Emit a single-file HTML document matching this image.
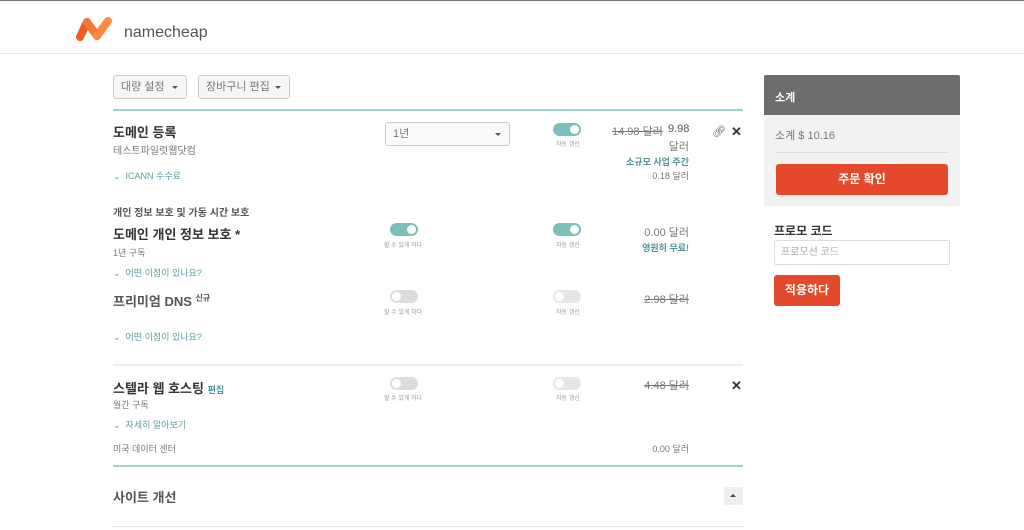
<!DOCTYPE html>
<html><head><meta charset="utf-8"><style>
*{margin:0;padding:0;box-sizing:border-box}
body{width:1024px;height:530px;background:#fff;position:relative;overflow:hidden;font-family:"Liberation Sans","Noto Sans CJK KR",sans-serif;color:#444}
.a{position:absolute;white-space:nowrap}
.b{font-weight:bold;color:#333}
.g{color:#777}
.t{color:#5a9ea0}
.s{text-decoration:line-through;color:#777}
.btn{position:absolute;border:1px solid #ccc;border-radius:3px;background:#f6f6f6;font-size:11px;color:#777;padding-left:7px;line-height:22px}
.car{position:absolute;right:8px;top:10px;border-left:3px solid transparent;border-right:3px solid transparent;border-top:3px solid #555}
.tg{position:absolute;width:28px;height:13px;border-radius:7px;background:#7dbfbb}
.tg::after{content:"";position:absolute;right:2px;top:2px;width:9px;height:9px;border-radius:50%;background:#fff}
.tg.off{background:#ddd}.tg.off::after{left:2px;right:auto}
.tl{position:absolute;font-size:6px;color:#999;white-space:nowrap}
.chev{font-size:9px;color:#5a9ea0}
.r{text-align:right}
</style></head><body>
<div class="a" style="left:0;top:0;width:1024px;height:1px;background:#777"></div>
<div class="a" style="left:0;top:53px;width:1024px;height:1px;background:#e6e6e6"></div>
<svg class="a" style="left:75px;top:16px" width="40" height="26" viewBox="0 0 40 26"><path d="M5 21 L12 6" stroke="#f25c22" stroke-width="8" stroke-linecap="round"/><path d="M12 6 L22 20" stroke="#f47a3a" stroke-width="8" stroke-linecap="round"/><path d="M22 20 L33 5" stroke="#ff8a3d" stroke-width="8" stroke-linecap="round"/></svg>
<div class="a" style="left:124px;top:24px;font-size:16px;color:#555">namecheap</div>

<div class="btn" style="left:113px;top:75px;width:74px;height:24px">대량 설정<span class="car"></span></div>
<div class="btn" style="left:198px;top:75px;width:92px;height:24px">장바구니 편집<span class="car"></span></div>
<div class="a" style="left:113px;top:109px;width:630px;height:2px;background:#9fd3d1"></div>

<div class="a b" style="left:113px;top:122px;font-size:13px">도메인 등록</div>
<div class="a g" style="left:113px;top:142px;font-size:10px">테스트파일럿웹닷컴</div>
<div class="btn" style="left:385px;top:122px;width:125px;height:24px;background:#fafafa">1년<span class="car"></span></div>
<div class="tg" style="left:553px;top:123px"></div><div class="tl" style="left:556px;top:139px">자동 갱신</div>
<div class="a s" style="left:612px;top:123px;font-size:11px">14.98 달러</div>
<div class="a" style="left:668px;top:123px;font-size:11px;color:#555">9.98</div>
<div class="a g r" style="left:600px;width:89px;top:138px;font-size:11px">달러</div>
<div class="a t b r" style="left:560px;width:129px;top:155px;font-size:9px;color:#4f9496">소규모 사업 주간</div>
<div class="a g r" style="left:600px;width:89px;top:169px;font-size:9px">0.18 달러</div>
<div class="a" style="left:712px;top:125px;font-size:11px;color:#555">🔗︎</div>
<div class="a" style="left:731px;top:124px;font-size:13px;font-weight:bold;color:#333">✕</div>
<div class="a t" style="left:113px;top:169px;font-size:9px"><span class="chev">⌄</span>&nbsp; ICANN 수수료</div>

<div class="a b" style="left:113px;top:204px;font-size:10px;color:#555">개인 정보 보호 및 가동 시간 보호</div>
<div class="a b" style="left:113px;top:224px;font-size:13px">도메인 개인 정보 보호 *</div>
<div class="a g" style="left:113px;top:246px;font-size:9px">1년 구독</div>
<div class="a t" style="left:113px;top:266px;font-size:9px"><span class="chev">⌄</span>&nbsp; 어떤 이점이 있나요?</div>
<div class="tg" style="left:390px;top:223px"></div><div class="tl" style="left:384px;top:240px">할 수 있게 하다</div>
<div class="tg" style="left:553px;top:223px"></div><div class="tl" style="left:556px;top:240px">자동 갱신</div>
<div class="a g r" style="left:580px;width:109px;top:224px;font-size:11px">0.00 달러</div>
<div class="a b r" style="left:580px;width:109px;top:241px;font-size:9px;color:#4f9496">영원히 무료!</div>

<div class="a b" style="left:113px;top:291px;font-size:13px;color:#555">프리미엄 DNS <sup style="font-size:8px">신규</sup></div>
<div class="tg off" style="left:390px;top:290px"></div><div class="tl" style="left:384px;top:307px">할 수 있게 하다</div>
<div class="tg off" style="left:553px;top:290px;background:#e6e6e6"></div><div class="tl" style="left:556px;top:307px">자동 갱신</div>
<div class="a s r" style="left:580px;width:109px;top:291px;font-size:11px">2.98 달러</div>
<div class="a t" style="left:113px;top:330px;font-size:9px"><span class="chev">⌄</span>&nbsp; 어떤 이점이 있나요?</div>
<div class="a" style="left:113px;top:364px;width:630px;height:2px;background:#ececec"></div>

<div class="a b" style="left:113px;top:378px;font-size:13px">스텔라 웹 호스팅 <span style="font-size:9px;color:#4f9496">편집</span></div>
<div class="a g" style="left:113px;top:398px;font-size:9px">월간 구독</div>
<div class="a t" style="left:113px;top:418px;font-size:9px"><span class="chev">⌄</span>&nbsp; 자세히 알아보기</div>
<div class="a g" style="left:113px;top:442px;font-size:9px">미국 데이터 센터</div>
<div class="tg off" style="left:390px;top:377px"></div><div class="tl" style="left:384px;top:393px">할 수 있게 하다</div>
<div class="tg off" style="left:553px;top:377px;background:#e6e6e6"></div><div class="tl" style="left:556px;top:393px">자동 갱신</div>
<div class="a s r" style="left:580px;width:109px;top:377px;font-size:11px">4.48 달러</div>
<div class="a g r" style="left:580px;width:109px;top:442px;font-size:9px">0.00 달러</div>
<div class="a" style="left:731px;top:378px;font-size:13px;font-weight:bold;color:#333">✕</div>
<div class="a" style="left:113px;top:465px;width:630px;height:2px;background:#9fd3d1"></div>

<div class="a b" style="left:113px;top:487px;font-size:13px;color:#555">사이트 개선</div>
<div class="a" style="left:724px;top:487px;width:19px;height:18px;background:#eee;border-radius:2px"><span style="position:absolute;left:6px;top:7px;border-left:3px solid transparent;border-right:3px solid transparent;border-bottom:3px solid #444"></span></div>
<div class="a" style="left:113px;top:526px;width:630px;height:1px;background:#e6e6e6"></div>

<div class="a" style="left:764px;top:75px;width:196px;height:40px;background:#6d6d6d;border-radius:2px 2px 0 0"></div>
<div class="a" style="left:775px;top:89px;font-size:11px;font-weight:bold;color:#fff">소계</div>
<div class="a" style="left:764px;top:115px;width:196px;height:91px;background:#f2f2f2"></div>
<div class="a g" style="left:775px;top:127px;font-size:11px">소계 $ 10.16</div>
<div class="a" style="left:775px;top:152px;width:174px;height:1px;background:#ddd"></div>
<div class="a" style="left:776px;top:164px;width:172px;height:31px;background:#e4492b;border-radius:3px;color:#fff;font-weight:bold;font-size:12px;text-align:center;line-height:31px">주문 확인</div>
<div class="a b" style="left:774px;top:222px;font-size:12px">프로모 코드</div>
<div class="a" style="left:774px;top:240px;width:176px;height:25px;border:1px solid #ddd;border-radius:2px;font-size:10px;color:#aaa;padding-left:6px;line-height:23px">프로모션 코드</div>
<div class="a" style="left:774px;top:275px;width:66px;height:31px;background:#e4492b;border-radius:3px;color:#fff;font-weight:bold;font-size:12px;text-align:center;line-height:31px">적용하다</div>
</body></html>
